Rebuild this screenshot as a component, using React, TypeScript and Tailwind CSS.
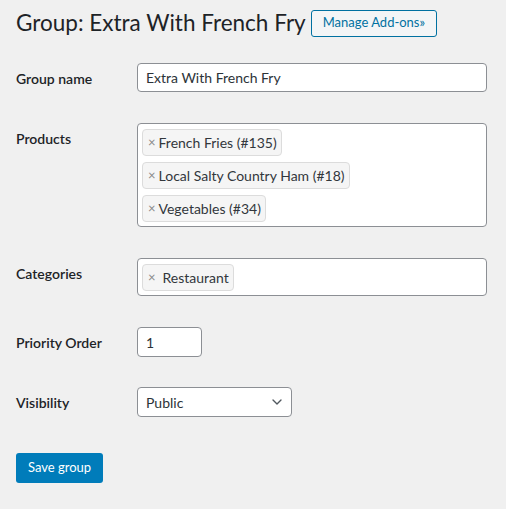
import { ChevronDown } from "lucide-react";

const products = ["French Fries (#135)", "Local Salty Country Ham (#18)", "Vegetables (#34)"];

function Tag({ label, spaced }: { label: string; spaced?: boolean }) {
  return (
    <span className="flex h-[27px] items-center rounded-[4px] border border-[#dcdcdc] bg-[#f5f5f5] pl-[5px] pr-[4px] text-[14px] text-[#32373c]">
      <span className={`text-[13px] leading-none text-[#888] ${spaced ? "mr-[7px]" : "mr-[3px]"}`}>×</span>
      {label}
    </span>
  );
}

function Row({ label, children }: { label: string; children: React.ReactNode }) {
  return (
    <div className="flex">
      <div className="w-[121px] shrink-0 pt-[7px] text-[14px] font-semibold leading-[18px] text-[#1d2327]">{label}</div>
      <div className="flex-1">{children}</div>
    </div>
  );
}

export default function App() {
  return (
    <div
      className="min-h-[509px] w-[506px] bg-[#f0f0f0] px-[16px] pt-[8px]"
      style={{ fontFamily: '"Segoe UI", Lato, "Noto Sans", sans-serif' }}
    >
      <div className="flex items-center gap-[5px]">
        <h1 className="text-[22.5px] font-normal leading-[30px] text-[#1d2327]">Group: Extra With French Fry</h1>
        <button className="h-[27px] rounded-[3px] border border-[#0071a1] bg-[#f3f5f6] px-[11px] text-[13px] text-[#0071a1]">
          Manage Add-ons»
        </button>
      </div>

      <div className="mt-[25px] flex flex-col gap-[31px]">
        <Row label="Group name">
          <div className="flex h-[29px] w-[350px] items-center rounded-[4px] border border-[#8c8f94] bg-white px-[8px] text-[14px] text-[#2c3338]">
            Extra With French Fry
          </div>
        </Row>
        <Row label="Products">
          <div className="flex h-[104px] w-[350px] flex-col items-start gap-[6px] rounded-[4px] border border-[#8c8f94] bg-white px-[4px] pt-[5px]">
            {products.map((p) => (
              <Tag key={p} label={p} />
            ))}
          </div>
        </Row>
        <Row label="Categories">
          <div className="flex h-[38px] w-[350px] items-start rounded-[4px] border border-[#8c8f94] bg-white px-[4px] pt-[5px]">
            <Tag label="Restaurant" spaced />
          </div>
        </Row>
        <Row label="Priority Order">
          <div className="flex h-[30px] w-[65px] items-center rounded-[4px] border border-[#8c8f94] bg-white px-[8px] text-[14px] text-[#2c3338]">
            1
          </div>
        </Row>
        <div className="-mt-px">
          <Row label="Visibility">
            <div className="flex h-[30px] w-[155px] items-center justify-between rounded-[4px] border border-[#8c8f94] bg-white pl-[8px] pr-[6px] text-[14px] text-[#2c3338]">
              Public
              <ChevronDown size={16} strokeWidth={2} className="text-[#50575e]" />
            </div>
          </Row>
        </div>
      </div>

      <button className="mt-[36px] h-[30px] rounded-[3px] bg-[#007cba] px-[12px] text-[13px] text-white">Save group</button>
    </div>
  );
}
